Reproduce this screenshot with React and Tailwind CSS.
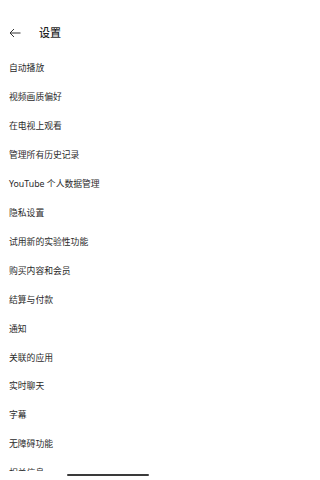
const items = [
  "自动播放",
  "视频画质偏好",
  "在电视上观看",
  "管理所有历史记录",
  "YouTube 个人数据管理",
  "隐私设置",
  "试用新的实验性功能",
  "购买内容和会员",
  "结算与付款",
  "通知",
  "关联的应用",
  "实时聊天",
  "字幕",
  "无障碍功能",
  "相关信息",
];

const App = () => {
  return (
    <div
      className="relative w-[216px] h-[480px] overflow-hidden bg-white text-[#1f1f1f]"
      style={{ fontFamily: '"Noto Sans", "Noto Sans CJK SC", sans-serif' }}
    >
      <div className="flex items-center h-[22px] mt-[22px] pl-[9px]">
        <svg width="12" height="10" viewBox="0 0 12 10" fill="none" stroke="#333" strokeWidth="1">
          <path d="M11.5 5H1M5 1L1 5l4 4" />
        </svg>
        <span className="ml-[18px] text-[11px] font-medium">设置</span>
      </div>

      <ul className="mt-[10.3px]">
        {items.map((item) => (
          <li key={item} className="flex items-center h-[28.95px] pl-[9px] text-[8.8px] text-[#2a2a2a]">
            {item}
          </li>
        ))}
      </ul>

      <div className="absolute bottom-0 left-0 w-full h-[9px] bg-white">
        <div className="absolute left-[67px] top-[3px] w-[82px] h-[2px] rounded-full bg-[#3a3a3a]" />
      </div>
    </div>
  );
};

export default App;
